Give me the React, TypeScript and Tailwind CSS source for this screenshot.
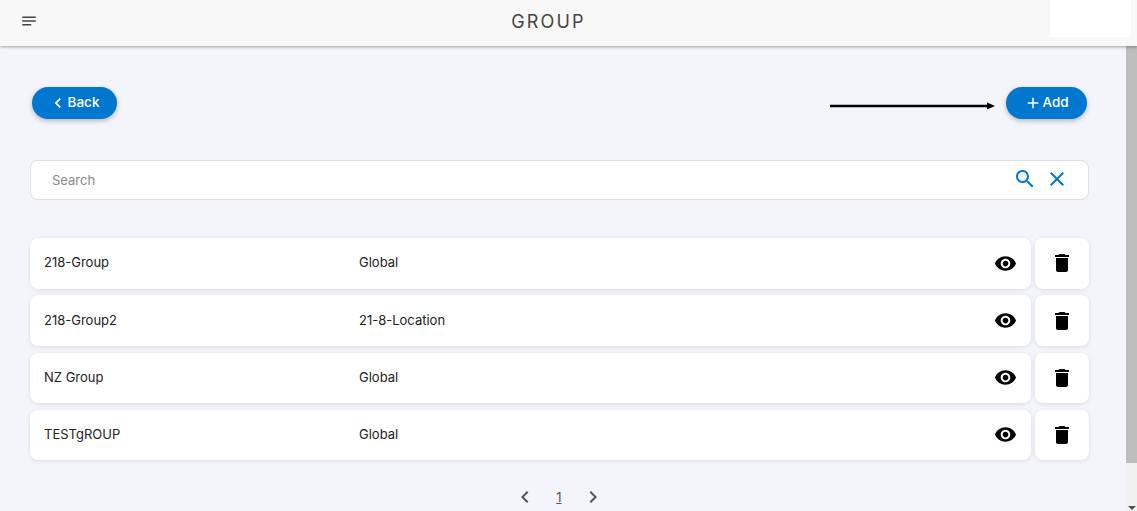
import { ReactNode } from "react"

const groups = [
  { name: "218-Group", location: "Global" },
  { name: "218-Group2", location: "21-8-Location" },
  { name: "NZ Group", location: "Global" },
  { name: "TESTgROUP", location: "Global" },
]

function Icon({ d, className }: { d: string; className: string }) {
  return (
    <svg viewBox="0 0 24 24" fill="currentColor" className={className}>
      <path d={d} />
    </svg>
  )
}

const icons = {
  notes: "M3 18h12v-2H3v2zM3 6v2h18V6H3zm0 7h18v-2H3v2z",
  left: "M15.41 7.41L14 6l-6 6 6 6 1.41-1.41L10.83 12z",
  right: "M10 6L8.59 7.41 13.17 12l-4.58 4.59L10 18l6-6z",
  add: "M19 13h-6v6h-2v-6H5v-2h6V5h2v6h6v2z",
  search:
    "M15.5 14h-.79l-.28-.27C15.41 12.59 16 11.11 16 9.5 16 5.91 13.09 3 9.5 3S3 5.91 3 9.5 5.91 16 9.5 16c1.61 0 3.09-.59 4.23-1.57l.27.28v.79l5 4.99L20.49 19l-4.99-5zm-6 0C7.01 14 5 11.99 5 9.5S7.01 5 9.5 5 14 7.01 14 9.5 11.99 14 9.5 14z",
  close:
    "M19 6.41L17.59 5 12 10.59 6.41 5 5 6.41 10.59 12 5 17.59 6.41 19 12 13.41 17.59 19 19 17.59 13.41 12z",
  eye: "M12 4.5C7 4.5 2.73 7.61 1 12c1.73 4.39 6 7.5 11 7.5s9.27-3.11 11-7.5c-1.73-4.39-6-7.5-11-7.5zM12 17c-2.76 0-5-2.24-5-5s2.24-5 5-5 5 2.24 5 5-2.24 5-5 5zm0-8c-1.66 0-3 1.34-3 3s1.34 3 3 3 3-1.34 3-3-1.34-3-3-3z",
  trash: "M6 19c0 1.1.9 2 2 2h8c1.1 0 2-.9 2-2V7H6v12zM19 4h-3.5l-1-1h-5l-1 1H5v2h14V4z",
}

function PillButton({ children, className }: { children: ReactNode; className: string }) {
  return (
    <button className={`flex h-8 items-center justify-center rounded-full bg-[#0277d0] pb-px text-[13.5px] font-medium text-white shadow-[0_2px_5px_rgba(0,0,0,0.25)] ${className}`}>
      {children}
    </button>
  )
}

function GroupRow({ name, location }: { name: string; location: string }) {
  return (
    <div className="flex h-[50.5px] gap-1">
      <div className="flex w-[1001px] items-center rounded-lg bg-white pb-[0.5px] pl-3.5 pr-[14px] text-[13px] text-[#222] shadow-[0_1px_4px_rgba(0,0,0,0.1)]">
        <span className="w-[315px]">{name}</span>
        <span className="flex-1">{location}</span>
        <Icon d={icons.eye} className="h-[23px] w-[23px] text-black" />
      </div>
      <div className="flex w-[54px] items-center justify-center rounded-lg bg-white pr-px shadow-[0_1px_4px_rgba(0,0,0,0.1)]">
        <Icon d={icons.trash} className="h-6 w-6 text-black" />
      </div>
    </div>
  )
}

export default function App() {
  return (
    <div className="flex h-[511px] flex-col overflow-hidden bg-[#f3f5fa] font-['Inter','Noto_Sans',sans-serif]">
      <header className="relative z-10 flex h-[46px] shrink-0 items-center bg-[#f8f8f8] pb-1 pl-[20px] shadow-[0_1px_3px_rgba(0,0,0,0.35)]">
        <Icon d={icons.notes} className="h-[18px] w-[18px] text-[#444]" />
        <h1 className="flex-1 pr-[78px] text-center text-[18px] tracking-[0.12em] text-[#444]">GROUP</h1>
        <div className="absolute right-[6px] top-0 h-[37px] w-[81px] bg-white" />
      </header>

      <div className="flex min-h-0 flex-1">
        <main className="min-w-0 flex-1 pl-[30px] pt-[41px]">
          <div className="flex h-8 items-center justify-between pl-0.5 pr-[39px]">
            <PillButton className="w-[85px] pr-0.5">
              <Icon d={icons.left} className="h-5 w-5" />
              Back
            </PillButton>
            <div className="flex items-center gap-[11px]">
              <svg viewBox="0 0 165 8" className="mt-1.5 h-2 w-[165px]">
                <path d="M0 4h158" stroke="black" strokeWidth="2.4" />
                <path d="M157 0.5L165 4L157 7.5z" fill="black" />
              </svg>
              <PillButton className="w-[81px]">
                <Icon d={icons.add} className="h-[18px] w-[18px]" />
                Add
              </PillButton>
            </div>
          </div>

          <div className="mt-[41px] flex h-10 w-[1059px] items-center rounded-lg border border-[#dedfe3] bg-white pl-[21px] pr-[19px]">
            <span className="flex-1 pt-0.5 text-[13px] text-[#8a8a8a]">Search</span>
            <Icon d={icons.search} className="mb-[3px] mr-2 h-6 w-6 text-[#0277d0]" />
            <Icon d={icons.close} className="mb-[3px] h-6 w-6 text-[#0277d0]" />
          </div>

          <div className="mt-[38px] flex flex-col gap-[6.8px]">
            {groups.map((group) => (
              <GroupRow key={group.name} name={group.name} location={group.location} />
            ))}
          </div>

          <nav className="mt-[25px] flex w-[1058px] items-center justify-center gap-[19px] text-[13px] text-[#555]">
            <Icon d={icons.left} className="h-6 w-6" />
            <span className="underline">1</span>
            <Icon d={icons.right} className="h-6 w-6" />
          </nav>
        </main>

        <aside className="flex w-[11px] shrink-0 flex-col bg-[#f1f1f1]">
          <div className="h-[417px] bg-[#bdbdbd]" />
          <div className="mt-auto flex justify-center pb-[1px]">
            <div className="h-0 w-0 border-x-[4px] border-t-[4px] border-x-transparent border-t-[#505050]" />
          </div>
        </aside>
      </div>
    </div>
  )
}
